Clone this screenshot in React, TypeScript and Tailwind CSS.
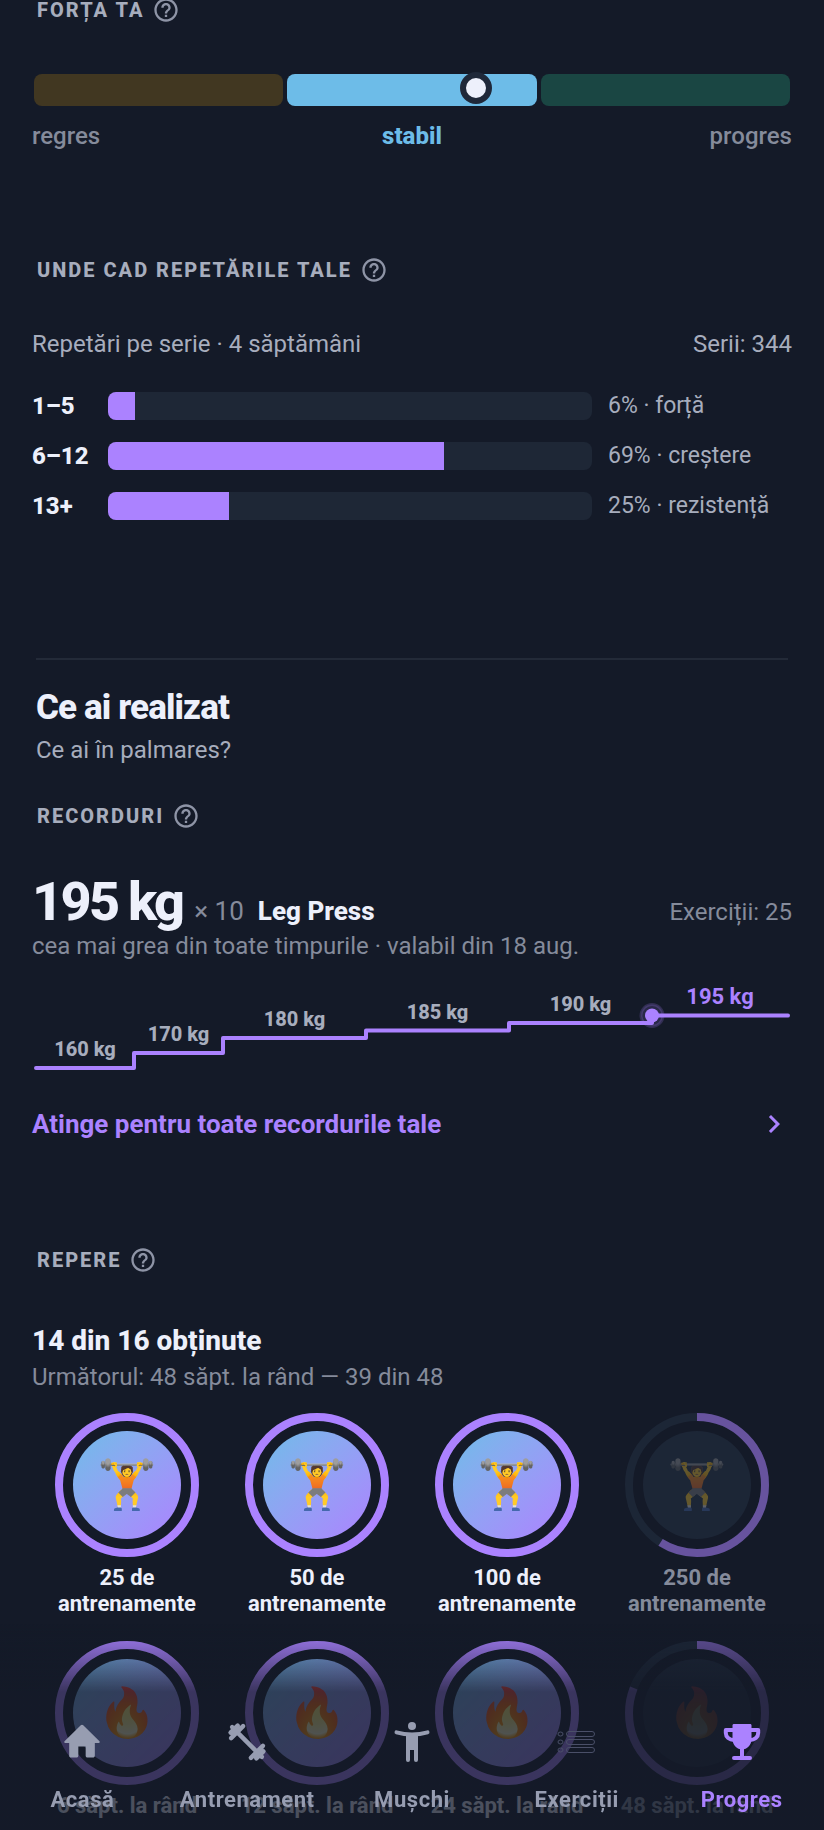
import type { ReactNode } from "react"

interface Badge {
  label: string
  icon: string
  progress: number
}

const totalSets = 344

const repRanges = [
  { range: "1–5", sets: 19, goal: "forță" },
  { range: "6–12", sets: 239, goal: "creștere" },
  { range: "13+", sets: 86, goal: "rezistență" },
]

// start and end are positions on the 760 unit wide timeline
const records = [
  { kg: 160, start: 4, end: 102 },
  { kg: 170, start: 102, end: 191 },
  { kg: 180, start: 191, end: 334 },
  { kg: 185, start: 334, end: 477 },
  { kg: 190, start: 477, end: 620 },
  { kg: 195, start: 620, end: 756 },
]

const badges: Badge[] = [
  { label: "25 de antrenamente", icon: "🏋️", progress: 100 },
  { label: "50 de antrenamente", icon: "🏋️", progress: 100 },
  { label: "100 de antrenamente", icon: "🏋️", progress: 100 },
  { label: "250 de antrenamente", icon: "🏋️", progress: 59 },
  { label: "6 săpt. la rând", icon: "🔥", progress: 100 },
  { label: "12 săpt. la rând", icon: "🔥", progress: 100 },
  { label: "24 săpt. la rând", icon: "🔥", progress: 100 },
  { label: "48 săpt. la rând", icon: "🔥", progress: 81 },
]

function HelpIcon() {
  return (
    <svg viewBox="0 0 24 24" className="h-7 w-7 fill-[#8e94a6]">
      <path d="M11 18h2v-2h-2v2zm1-16C6.48 2 2 6.48 2 12s4.48 10 10 10 10-4.48 10-10S17.52 2 12 2zm0 18c-4.41 0-8-3.59-8-8s3.59-8 8-8 8 3.59 8 8-3.59 8-8 8zm0-14c-2.21 0-4 1.79-4 4h2c0-1.1.9-2 2-2s2 .9 2 2c0 2-3 1.75-3 5h2c0-2.25 3-2.5 3-5 0-2.21-1.79-4-4-4z" />
    </svg>
  )
}

function SectionTitle({ children }: { children: ReactNode }) {
  return (
    <div className="flex h-5 items-center gap-2 px-[5px]">
      <h3 className="text-[20px] leading-5 font-extrabold tracking-widest whitespace-nowrap text-[#a7adbd] uppercase">
        {children}
      </h3>
      <button type="button" aria-label="Ajutor">
        <HelpIcon />
      </button>
    </div>
  )
}

function StrengthMeter() {
  return (
    <div>
      <div
        role="meter"
        aria-label="Forța ta"
        aria-valuenow={58}
        aria-valuemin={0}
        aria-valuemax={100}
        className="relative mx-0.5 grid h-8 grid-cols-3 gap-1"
      >
        <div className="rounded-lg bg-[#413721]" />
        <div className="rounded-lg bg-[#6dbce8]" />
        <div className="rounded-lg bg-[#1a4643]" />
        <div
          className="absolute -top-0.5 h-8 w-8 -translate-x-1/2 rounded-full border-6 border-[#1f2839] bg-[#edf0fb]"
          style={{ left: "58.5%" }}
        />
      </div>
      <div className="mt-3.5 grid grid-cols-3 text-[24px] leading-8 text-[#858b9b]">
        <span className="font-medium">regres</span>
        <span className="text-center font-extrabold text-[#6dbce8]">stabil</span>
        <span className="text-right font-medium">progres</span>
      </div>
    </div>
  )
}

function RecordSteps() {
  const lineY = (kg: number) => 106 - (kg - 160) * 1.5
  const line = records.map((r, i) => `${i === 0 ? "M" : "L"}${r.start} ${lineY(r.kg)}H${r.end}`).join("")
  const best = records[records.length - 1]

  return (
    <svg viewBox="0 0 760 120" className="block w-full" role="img" aria-label="Evoluția recordului">
      <path d={line} fill="none" stroke="#ab82ff" strokeWidth="4" strokeLinecap="round" strokeLinejoin="round" />
      <circle
        cx={best.start}
        cy={lineY(best.kg)}
        r="11"
        fill="#ab82ff"
        fillOpacity="0.15"
        stroke="#ab82ff"
        strokeOpacity="0.2"
        strokeWidth="3"
      />
      <circle cx={best.start} cy={lineY(best.kg)} r="7" fill="#ab82ff" />
      {records.map(r => (
        <text
          key={r.kg}
          x={(r.start + r.end) / 2}
          y={lineY(r.kg) - 12}
          textAnchor="middle"
          className={r === best ? "fill-[#ab82ff] text-[22px] font-bold" : "fill-[#a7adbd] text-[20px] font-extrabold"}
        >
          {r.kg} kg
        </text>
      ))}
    </svg>
  )
}

function BadgeItem({ badge }: { badge: Badge }) {
  const earned = badge.progress === 100
  return (
    <li className="flex flex-col items-center">
      <div className={earned ? "relative h-36 w-36" : "relative h-36 w-36 opacity-55"}>
        <svg viewBox="0 0 144 144" className="h-full w-full -rotate-90" fill="none" strokeWidth="8">
          <circle cx="72" cy="72" r="68" stroke="#243042" />
          <circle
            cx="72"
            cy="72"
            r="68"
            stroke="#ab82ff"
            pathLength="100"
            strokeDasharray={earned ? undefined : `${badge.progress} 100`}
          />
        </svg>
        <div
          className={
            earned
              ? "absolute inset-[18px] flex items-center justify-center rounded-full bg-linear-to-br from-[#6dbce8] to-[#ab82ff] text-5xl"
              : "absolute inset-[18px] flex items-center justify-center rounded-full bg-[#243042] text-5xl"
          }
        >
          <span className={earned ? "" : "opacity-60"}>{badge.icon}</span>
        </div>
      </div>
      <p
        className={
          earned
            ? "mt-2 max-w-40 text-center text-[22px] leading-[26px] font-bold text-[#edf0fb]"
            : "mt-2 max-w-40 text-center text-[22px] leading-[26px] font-bold text-[#858b9b]"
        }
      >
        {badge.label}
      </p>
    </li>
  )
}

function HomeIcon() {
  return (
    <svg viewBox="0 0 24 24" className="h-11 w-11 fill-current">
      <path d="M10 19.500v-5h4v5c0 .55.45 1 1 1h3c.55 0 1-.45 1-1v-7h2.200c.46 0 .68-.57.33-.87L12.670 2.900a1 1 0 0 0-1.340 0L2.470 11.630c-.34.3-.13.87.33.87H5v7c0 .55.45 1 1 1h3c.55 0 1-.45 1-1z" />
    </svg>
  )
}

function DumbbellIcon() {
  return (
    <svg viewBox="0 0 44 44" className="h-11 w-11" fill="none" stroke="currentColor" strokeWidth="4.5" strokeLinecap="round">
      <path transform="rotate(45 22 22)" d="M1 22H43M8 13.5V30.5M3.8 17V27M36 13.5V30.5M40.2 17V27" />
    </svg>
  )
}

function BodyIcon() {
  return (
    <svg viewBox="0 0 44 44" className="h-11 w-11" fill="none" stroke="currentColor" strokeWidth="4" strokeLinecap="round">
      <circle cx="22" cy="6" r="4" fill="currentColor" stroke="none" />
      <path d="M6.5 12.3Q14 14.5 22 14.5T37.5 12.3M18 15V40M26 15V40" />
      <path d="M16 13h12v17H16z" fill="currentColor" stroke="none" />
    </svg>
  )
}

function ListIcon() {
  return (
    <svg viewBox="0 0 44 44" className="h-11 w-11" fill="none" stroke="#4a4f68" strokeWidth="1">
      {[14, 22, 30].map(y => (
        <g key={y}>
          <ellipse cx="5.5" cy={y} rx="2.5" ry="2" />
          <rect x="11.5" y={y - 2.5} width="28" height="5" rx="2.5" />
        </g>
      ))}
    </svg>
  )
}

function TrophyIcon() {
  return (
    <svg viewBox="0 0 44 44" className="h-11 w-11" fill="none" stroke="currentColor" strokeWidth="4" strokeLinecap="round" strokeLinejoin="round">
      <path d="M14 10H5.8v3c0 4 3.5 7 8.2 7M30 10h8.200v3c0 4-3.5 7-8.200 7M22 28v10M14 38h16" />
      <path d="M14 4h16c1 0 1.5.5 1.5 1.5V19c0 6-4.5 10.5-9.5 10.5S12.5 25 12.500 19V5.5C12.500 4.5 13 4 14 4z" fill="currentColor" stroke="none" />
    </svg>
  )
}

const tabs = [
  { label: "Acasă", icon: <HomeIcon />, active: false },
  { label: "Antrenament", icon: <DumbbellIcon />, active: false },
  { label: "Mușchi", icon: <BodyIcon />, active: false },
  { label: "Exerciții", icon: <ListIcon />, active: false },
  { label: "Progres", icon: <TrophyIcon />, active: true },
]

function TabBar() {
  return (
    <nav className="fixed inset-x-0 bottom-0 bg-linear-to-b from-[#141a28]/0 to-[#141a28]/75 to-[68px] pt-24 pb-4">
      <ul className="grid grid-cols-5">
        {tabs.map(tab => (
          <li key={tab.label}>
            <a
              href="#"
              aria-current={tab.active ? "page" : undefined}
              className={
                tab.active
                  ? "flex flex-col items-center gap-[22px] text-[#ab82ff]"
                  : "flex flex-col items-center gap-[22px] text-[#979db1]"
              }
            >
              {tab.icon}
              <span className="text-[22px] leading-7 font-bold tracking-wide">{tab.label}</span>
            </a>
          </li>
        ))}
      </ul>
    </nav>
  )
}

export default function App() {
  return (
    <div className="min-h-screen bg-[#141a28] font-[Roboto,sans-serif] text-[#a7adbd]">
      <main className="px-8 pb-3">
        <section>
          <SectionTitle>Forța ta</SectionTitle>
          <div className="mt-[54px]">
            <StrengthMeter />
          </div>
        </section>

        {/* Rep ranges */}
        <section className="mt-[108px]">
          <SectionTitle>Unde cad repetările tale</SectionTitle>
          <div className="mt-12 flex justify-between text-[24px] leading-8">
            <p>Repetări pe serie · 4 săptămâni</p>
            <p>Serii: {totalSets}</p>
          </div>
          <div className="mt-8 flex flex-col gap-[22px]">
            {repRanges.map(item => {
              const share = (item.sets / totalSets) * 100
              return (
                <div key={item.range} className="grid h-7 grid-cols-[60px_1fr_184px] items-center gap-4 leading-7">
                  <span className="text-[24px] font-extrabold text-[#edf0fb]">{item.range}</span>
                  <div className="h-7 overflow-hidden rounded-lg bg-[#1e2736]">
                    <div className="h-full bg-[#ab82ff]" style={{ width: `${share}%` }} />
                  </div>
                  <span className="text-[23px] whitespace-nowrap">
                    {Math.round(share)}% · {item.goal}
                  </span>
                </div>
              )
            })}
          </div>
        </section>

        <div className="mx-1 mt-[138px] border-t-2 border-[#232a38] pt-7">
          <h2 className="text-[35px] leading-10 font-extrabold tracking-tight text-[#edf0fb]">Ce ai realizat</h2>
          <p className="mt-1.5 text-[24px] leading-8">Ce ai în palmares?</p>
        </div>

        {/* Records */}
        <section className="mt-10">
          <SectionTitle>Recorduri</SectionTitle>
          <div className="mt-12 flex items-baseline">
            <p className="text-[54px] leading-14 font-extrabold tracking-tighter text-[#edf0fb]">195 kg</p>
            <p className="ml-3 text-[26px] leading-8 text-[#858b9b]">× 10</p>
            <p className="ml-3.5 text-[26px] leading-8 font-extrabold text-[#edf0fb]">Leg Press</p>
            <p className="ml-auto text-[24px] leading-8 text-[#858b9b]">Exerciții: 25</p>
          </div>
          <p className="text-[24px] leading-8 text-[#858b9b]">cea mai grea din toate timpurile · valabil din 18 aug.</p>
          <RecordSteps />
          <a href="#" className="mt-[26px] flex h-8 items-center justify-between text-[26px] leading-8 font-bold text-[#ab82ff]">
            Atinge pentru toate recordurile tale
            <svg viewBox="0 0 24 24" className="h-9 w-9 fill-current">
              <path d="M10 6 8.590 7.410 13.170 12l-4.580 4.590L10 18l6-6z" />
            </svg>
          </a>
        </section>

        {/* Milestones */}
        <section className="mt-[110px]">
          <SectionTitle>Repere</SectionTitle>
          <p className="mt-[55px] text-[28px] leading-8 font-extrabold text-[#edf0fb]">14 din 16 obținute</p>
          <p className="mt-1 text-[24px] leading-8 text-[#858b9b]">Următorul: 48 săpt. la rând — 39 din 48</p>
          <ul className="mt-5 grid grid-cols-4 gap-y-6">
            {badges.map(badge => (
              <BadgeItem key={badge.label} badge={badge} />
            ))}
          </ul>
        </section>
      </main>
      <TabBar />
    </div>
  )
}
